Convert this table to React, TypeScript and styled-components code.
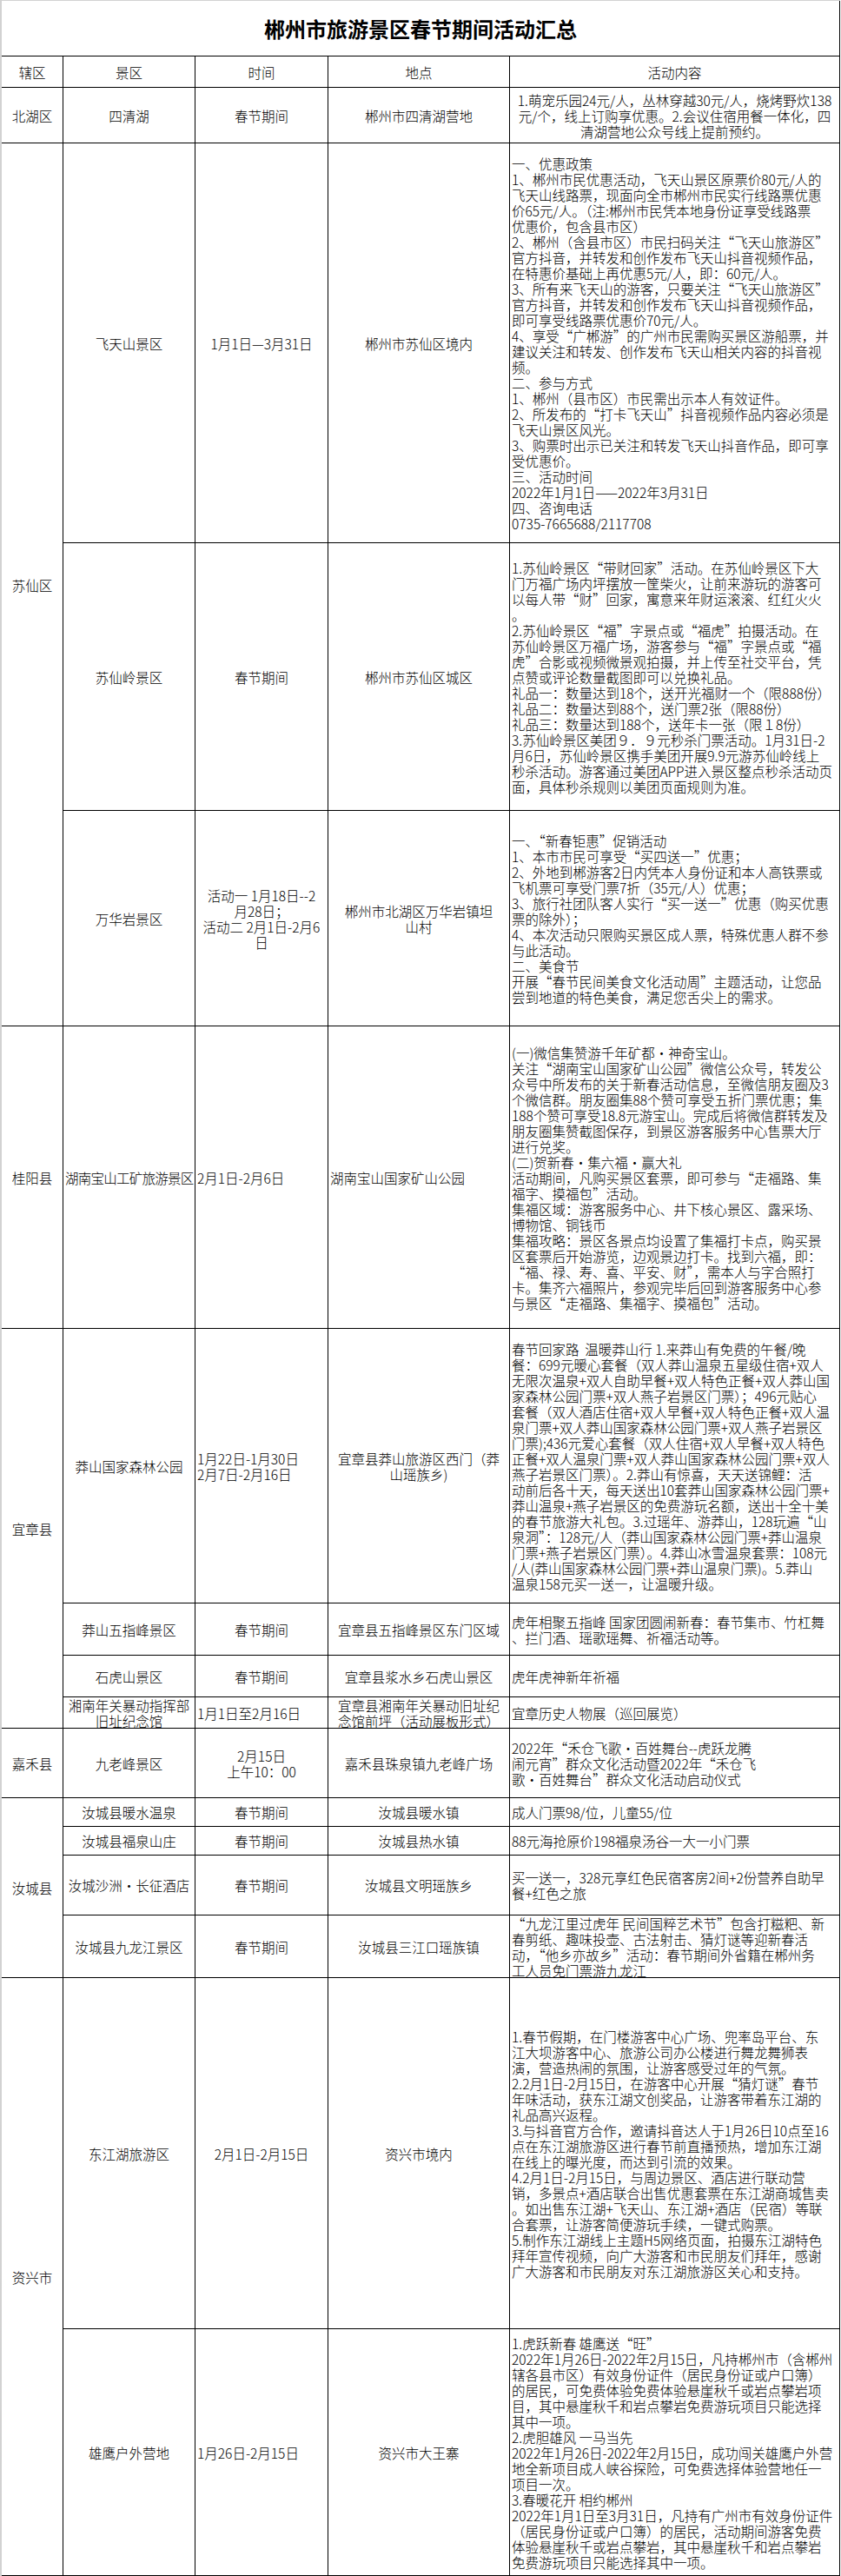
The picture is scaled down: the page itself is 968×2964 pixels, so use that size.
import React from 'react';
import styled, { createGlobalStyle } from 'styled-components';

type Align = 'left' | 'center';

interface Row {
  h: number;
  name: string;
  nameAlign?: Align;
  nameCondensed?: boolean;
  time: string;
  timeAlign?: Align;
  place: string;
  placeAlign?: Align;
  content: string;
  contentAlign?: Align;
}

interface Group {
  region: string;
  rows: Row[];
}

const GlobalStyle = createGlobalStyle`
  *, *::before, *::after { box-sizing: border-box; }
  html, body { margin: 0; padding: 0; background: #ffffff; }
  body {
    font-family: "Noto Sans CJK SC", "Noto Sans", sans-serif;
    color: #000000;
  }
`;

const Sheet = styled.div<{ $rows: string }>`
  display: grid;
  grid-template-columns: 71px 152px 153px 209px 380px;
  grid-template-rows: ${(p) => p.$rows};
  width: 967px;
  border-left: 2px solid #d2d2d2;
  border-top: 1px solid #d2d2d2;
  font-size: 15.5px;
  font-weight: 300;
  line-height: 18px;
`;

const Title = styled.div`
  grid-column: 1 / -1;
  display: flex;
  align-items: center;
  justify-content: center;
  font-size: 24px;
  font-weight: 700;
  border-right: 1px solid #000;
  border-bottom: 1px solid #000;
`;

const Cell = styled.div<{ $align?: Align; $span?: number; $condensed?: boolean }>`
  grid-row: span ${(p) => p.$span ?? 1};
  display: flex;
  align-items: center;
  justify-content: ${(p) => (p.$align === 'left' ? 'flex-start' : 'safe center')};
  text-align: ${(p) => (p.$align === 'left' ? 'left' : 'center')};
  padding: ${(p) => (p.$condensed ? '0 0 0 2px' : '0 2px')};
  letter-spacing: ${(p) => (p.$condensed ? '-0.75px' : 'normal')};
  border-right: 1px solid #000;
  border-bottom: 1px solid #000;
  white-space: pre;
  min-width: 0;
`;

const groups: Group[] = [
  {
    region: '北湖区',
    rows: [
      {
        h: 64,
        name: '四清湖',
        time: '春节期间',
        place: '郴州市四清湖营地',
        content:
          '1.萌宠乐园24元/人，丛林穿越30元/人，烧烤野炊138\n元/个，线上订购享优惠。2.会议住宿用餐一体化，四\n清湖营地公众号线上提前预约。',
        contentAlign: 'center',
      },
    ],
  },
  {
    region: '苏仙区',
    rows: [
      {
        h: 460,
        name: '飞天山景区',
        time: '1月1日—3月31日',
        place: '郴州市苏仙区境内',
        content: [
          '一、优惠政策',
          '1、郴州市民优惠活动，飞天山景区原票价80元/人的',
          '飞天山线路票，现面向全市郴州市民实行线路票优惠',
          '价65元/人。（注:郴州市民凭本地身份证享受线路票',
          '优惠价，包含县市区）',
          '2、郴州（含县市区）市民扫码关注“飞天山旅游区”',
          '官方抖音，并转发和创作发布飞天山抖音视频作品，',
          '在特惠价基础上再优惠5元/人，即：60元/人。',
          '3、所有来飞天山的游客，只要关注“飞天山旅游区”',
          '官方抖音，并转发和创作发布飞天山抖音视频作品，',
          '即可享受线路票优惠价70元/人。',
          '4、享受“广郴游”的广州市民需购买景区游船票，并',
          '建议关注和转发、创作发布飞天山相关内容的抖音视',
          '频。',
          '二、参与方式',
          '1、郴州（县市区）市民需出示本人有效证件。',
          '2、所发布的“打卡飞天山”抖音视频作品内容必须是',
          '飞天山景区风光。',
          '3、购票时出示已关注和转发飞天山抖音作品，即可享',
          '受优惠价。',
          '三、活动时间',
          '2022年1月1日——2022年3月31日',
          '四、咨询电话',
          '0735-7665688/2117708',
        ].join('\n'),
      },
      {
        h: 308,
        name: '苏仙岭景区',
        time: '春节期间',
        place: '郴州市苏仙区城区',
        content: [
          '1.苏仙岭景区“带财回家”活动。在苏仙岭景区下大',
          '门万福广场内坪摆放一筐柴火，让前来游玩的游客可',
          '以每人带“财”回家，寓意来年财运滚滚、红红火火',
          '。',
          '2.苏仙岭景区“福”字景点或“福虎”拍摄活动。在',
          '苏仙岭景区万福广场，游客参与“福”字景点或“福',
          '虎”合影或视频微景观拍摄，并上传至社交平台，凭',
          '点赞或评论数量截图即可以兑换礼品。',
          '礼品一：数量达到18个，送开光福财一个（限888份）',
          '礼品二：数量达到88个，送门票2张（限88份）',
          '礼品三：数量达到188个，送年卡一张（限１8份）',
          '3.苏仙岭景区美团９．９元秒杀门票活动。1月31日-2',
          '月6日，苏仙岭景区携手美团开展9.9元游苏仙岭线上',
          '秒杀活动。游客通过美团APP进入景区整点秒杀活动页',
          '面，具体秒杀规则以美团页面规则为准。',
        ].join('\n'),
      },
      {
        h: 248,
        name: '万华岩景区',
        time: '活动一 1月18日--2\n月28日；\n活动二 2月1日-2月6\n日',
        place: '郴州市北湖区万华岩镇坦\n山村',
        content: [
          '一、“新春钜惠”促销活动',
          '1、本市市民可享受“买四送一”优惠；',
          '2、外地到郴游客2日内凭本人身份证和本人高铁票或',
          '飞机票可享受门票7折（35元/人）优惠；',
          '3、旅行社团队客人实行“买一送一”优惠（购买优惠',
          '票的除外）；',
          '4、本次活动只限购买景区成人票，特殊优惠人群不参',
          '与此活动。',
          '二、美食节',
          '开展“春节民间美食文化活动周”主题活动，让您品',
          '尝到地道的特色美食，满足您舌尖上的需求。',
        ].join('\n'),
      },
    ],
  },
  {
    region: '桂阳县',
    rows: [
      {
        h: 348,
        name: '湖南宝山工矿旅游景区',
        nameAlign: 'left',
        nameCondensed: true,
        time: '2月1日-2月6日',
        timeAlign: 'left',
        place: '湖南宝山国家矿山公园',
        placeAlign: 'left',
        content: [
          '(一)微信集赞游千年矿都·神奇宝山。',
          '关注“湖南宝山国家矿山公园”微信公众号，转发公',
          '众号中所发布的关于新春活动信息，至微信朋友圈及3',
          '个微信群。朋友圈集88个赞可享受五折门票优惠；集',
          '188个赞可享受18.8元游宝山。完成后将微信群转发及',
          '朋友圈集赞截图保存，到景区游客服务中心售票大厅',
          '进行兑奖。',
          '(二)贺新春·集六福·赢大礼',
          '活动期间，凡购买景区套票，即可参与“走福路、集',
          '福字、摸福包”活动。',
          '集福区域：游客服务中心、井下核心景区、露采场、',
          '博物馆、铜钱币',
          '集福攻略：景区各景点均设置了集福打卡点，购买景',
          '区套票后开始游览，边观景边打卡。找到六福，即：',
          '“福、禄、寿、喜、平安、财”，需本人与字合照打',
          '卡。集齐六福照片，参观完毕后回到游客服务中心参',
          '与景区“走福路、集福字、摸福包”活动。',
        ].join('\n'),
      },
    ],
  },
  {
    region: '宜章县',
    rows: [
      {
        h: 316,
        name: '莽山国家森林公园',
        time: '1月22日-1月30日\n2月7日-2月16日',
        timeAlign: 'left',
        place: '宜章县莽山旅游区西门（莽\n山瑶族乡)',
        content: [
          '春节回家路  温暖莽山行 1.来莽山有免费的午餐/晚',
          '餐：699元暖心套餐（双人莽山温泉五星级住宿+双人',
          '无限次温泉+双人自助早餐+双人特色正餐+双人莽山国',
          '家森林公园门票+双人燕子岩景区门票）；496元贴心',
          '套餐（双人酒店住宿+双人早餐+双人特色正餐+双人温',
          '泉门票+双人莽山国家森林公园门票+双人燕子岩景区',
          '门票);436元爱心套餐（双人住宿+双人早餐+双人特色',
          '正餐+双人温泉门票+双人莽山国家森林公园门票+双人',
          '燕子岩景区门票）。2.莽山有惊喜，天天送锦鲤：活',
          '动前后各十天，每天送出10套莽山国家森林公园门票+',
          '莽山温泉+燕子岩景区的免费游玩名额，送出十全十美',
          '的春节旅游大礼包。3.过瑶年、游莽山，128玩遍“山',
          '泉洞”：128元/人（莽山国家森林公园门票+莽山温泉',
          '门票+燕子岩景区门票）。4.莽山冰雪温泉套票：108元',
          '/人(莽山国家森林公园门票+莽山温泉门票)。5.莽山',
          '温泉158元买一送一，让温暖升级。',
        ].join('\n'),
      },
      {
        h: 60,
        name: '莽山五指峰景区',
        time: '春节期间',
        place: '宜章县五指峰景区东门区域',
        content: '虎年相聚五指峰 国家团圆闹新春：春节集市、竹杠舞\n、拦门酒、瑶歌瑶舞、祈福活动等。',
      },
      {
        h: 48,
        name: '石虎山景区',
        time: '春节期间',
        place: '宜章县浆水乡石虎山景区',
        content: '虎年虎神新年祈福',
      },
      {
        h: 36,
        name: '湘南年关暴动指挥部\n旧址纪念馆',
        time: '1月1日至2月16日',
        timeAlign: 'left',
        place: '宜章县湘南年关暴动旧址纪\n念馆前坪（活动展板形式）',
        content: '宜章历史人物展（巡回展览）',
      },
    ],
  },
  {
    region: '嘉禾县',
    rows: [
      {
        h: 80,
        name: '九老峰景区',
        time: '2月15日\n上午10：00',
        place: '嘉禾县珠泉镇九老峰广场',
        content:
          '2022年“禾仓飞歌·百姓舞台--虎跃龙腾\n闹元宵”群众文化活动暨2022年“禾仓飞\n歌·百姓舞台”群众文化活动启动仪式',
      },
    ],
  },
  {
    region: '汝城县',
    rows: [
      {
        h: 33,
        name: '汝城县暖水温泉',
        time: '春节期间',
        place: '汝城县暖水镇',
        content: '成人门票98/位，儿童55/位',
      },
      {
        h: 33,
        name: '汝城县福泉山庄',
        time: '春节期间',
        place: '汝城县热水镇',
        content: '88元海抢原价198福泉汤谷一大一小门票',
      },
      {
        h: 69,
        name: '汝城沙洲·长征酒店',
        time: '春节期间',
        place: '汝城县文明瑶族乡',
        content: '买一送一，328元享红色民宿客房2间+2份营养自助早\n餐+红色之旅',
      },
      {
        h: 72,
        name: '汝城县九龙江景区',
        time: '春节期间',
        place: '汝城县三江口瑶族镇',
        content: [
          '“九龙江里过虎年 民间国粹艺术节”包含打糍粑、新',
          '春剪纸、趣味投壶、古法射击、猜灯谜等迎新春活',
          '动，“他乡亦故乡”活动：春节期间外省籍在郴州务',
          '工人员免门票游九龙江',
        ].join('\n'),
      },
    ],
  },
  {
    region: '资兴市',
    rows: [
      {
        h: 404,
        name: '东江湖旅游区',
        time: '2月1日-2月15日',
        place: '资兴市境内',
        content: [
          '1.春节假期，在门楼游客中心广场、兜率岛平台、东',
          '江大坝游客中心、旅游公司办公楼进行舞龙舞狮表',
          '演，营造热闹的氛围，让游客感受过年的气氛。',
          '2.2月1日-2月15日，在游客中心开展“猜灯谜”春节',
          '年味活动，获东江湖文创奖品，让游客带着东江湖的',
          '礼品高兴返程。',
          '3.与抖音官方合作，邀请抖音达人于1月26日10点至16',
          '点在东江湖旅游区进行春节前直播预热，增加东江湖',
          '在线上的曝光度，而达到引流的效果。',
          '4.2月1日-2月15日，与周边景区、酒店进行联动营',
          '销，多景点+酒店联合出售优惠套票在东江湖商城售卖',
          '。如出售东江湖+飞天山、东江湖+酒店（民宿）等联',
          '合套票，让游客简便游玩手续，一键式购票。',
          '5.制作东江湖线上主题H5网络页面，拍摄东江湖特色',
          '拜年宣传视频，向广大游客和市民朋友们拜年，感谢',
          '广大游客和市民朋友对东江湖旅游区关心和支持。',
        ].join('\n'),
      },
      {
        h: 284,
        name: '雄鹰户外营地',
        time: '1月26日-2月15日',
        timeAlign: 'left',
        place: '资兴市大王寨',
        content: [
          '1.虎跃新春 雄鹰送“旺”',
          '2022年1月26日-2022年2月15日，凡持郴州市（含郴州',
          '辖各县市区）有效身份证件（居民身份证或户口簿）',
          '的居民，可免费体验免费体验悬崖秋千或岩点攀岩项',
          '目，其中悬崖秋千和岩点攀岩免费游玩项目只能选择',
          '其中一项。',
          '2.虎胆雄风 一马当先',
          '2022年1月26日-2022年2月15日，成功闯关雄鹰户外营',
          '地全新项目成人峡谷探险，可免费选择体验营地任一',
          '项目一次。',
          '3.春暖花开 相约郴州',
          '2022年1月1日至3月31日，凡持有广州市有效身份证件',
          '（居民身份证或户口簿）的居民，活动期间游客免费',
          '体验悬崖秋千或岩点攀岩，其中悬崖秋千和岩点攀岩',
          '免费游玩项目只能选择其中一项。',
        ].join('\n'),
      },
    ],
  },
];

const headers = ['辖区', '景区', '时间', '地点', '活动内容'];

export default function App() {
  const rowHeights = ['64px', '36px', ...groups.flatMap((g) => g.rows.map((r) => `${r.h}px`))].join(' ');
  return (
    <>
      <GlobalStyle />
      <Sheet $rows={rowHeights}>
        <Title>郴州市旅游景区春节期间活动汇总</Title>
        {headers.map((h) => (
          <Cell key={h}>{h}</Cell>
        ))}
        {groups.map((g) =>
          g.rows.map((r, i) => (
            <React.Fragment key={`${g.region}-${r.name}`}>
              {i === 0 && <Cell $span={g.rows.length}>{g.region}</Cell>}
              <Cell $align={r.nameAlign} $condensed={r.nameCondensed}>
                {r.name}
              </Cell>
              <Cell $align={r.timeAlign}>{r.time}</Cell>
              <Cell $align={r.placeAlign}>{r.place}</Cell>
              <Cell $align={r.contentAlign ?? 'left'}>{r.content}</Cell>
            </React.Fragment>
          ))
        )}
      </Sheet>
    </>
  );
}
